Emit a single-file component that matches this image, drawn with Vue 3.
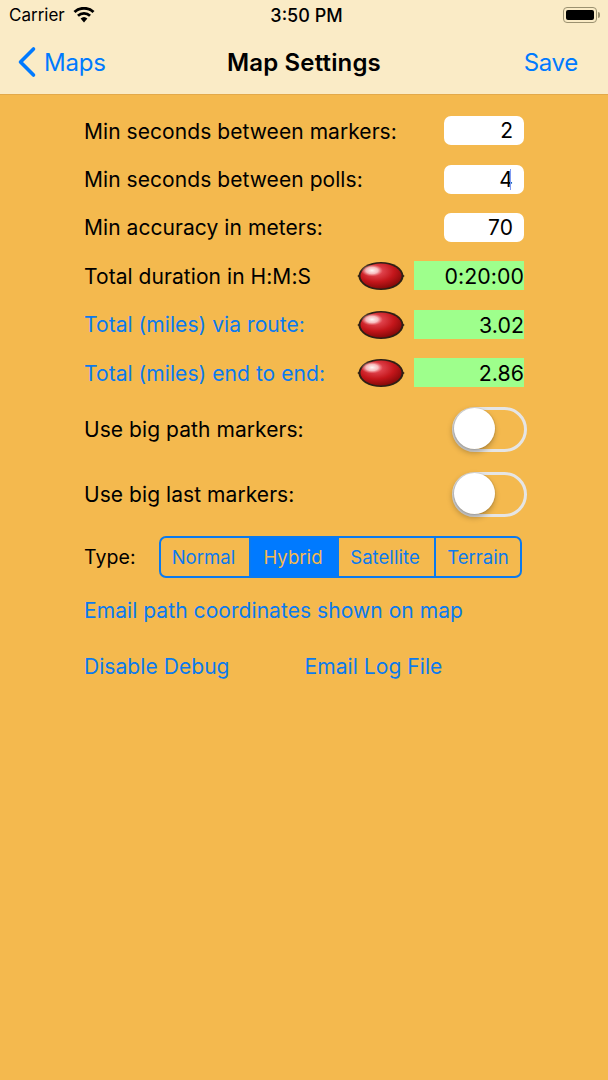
<template>
  <div class="screen">
    <header class="top">
      <div class="status">
        <div class="status-left">
          <span>Carrier</span>
          <svg class="wifi" width="22" height="16" viewBox="0 0 22 16" aria-hidden="true">
            <path d="M11 15.5 7.6 11.6a5 5 0 0 1 6.8 0Z" fill="#000" />
            <path d="M5.9 9.8 4 7.7a10.4 10.4 0 0 1 14 0l-1.9 2.1a7.6 7.6 0 0 0-10.2 0Z" fill="#000" />
            <path d="M2.5 6 .5 3.9a15.6 15.6 0 0 1 21 0L19.5 6a12.7 12.7 0 0 0-17 0Z" fill="#000" />
          </svg>
        </div>
        <span class="clock">3:50 PM</span>
        <div class="battery" aria-hidden="true"><span class="battery-fill" /></div>
      </div>
      <nav class="nav">
        <a class="back">
          <svg width="20" height="32" viewBox="0 0 20 32" aria-hidden="true">
            <path d="M16.5 3 3.5 16l13 13" fill="none" stroke="#007aff" stroke-width="3.6" stroke-linecap="round" stroke-linejoin="round" />
          </svg>
          <span>Maps</span>
        </a>
        <span class="title">Map Settings</span>
        <a class="save">Save</a>
      </nav>
    </header>

    <main class="content">
      <div v-for="row in inputRows" :key="row.label" class="row">
        <span>{{ row.label }}</span>
        <div class="input"><span :class="{ caret: row.focused }">{{ row.value }}</span></div>
      </div>

      <div v-for="row in totalRows" :key="row.label" class="row">
        <span :class="{ link: row.link }">{{ row.label }}</span>
        <div class="readout">
          <svg class="led" width="48" height="30" viewBox="0 0 48 30" aria-hidden="true">
            <defs>
              <radialGradient :id="`red${row.id}`" cx="0.38" cy="0.3" r="0.8">
                <stop offset="0" stop-color="#ee5a66" />
                <stop offset="0.55" stop-color="#c4161b" />
                <stop offset="0.88" stop-color="#8a0a0a" />
                <stop offset="1" stop-color="#4a0504" />
              </radialGradient>
              <radialGradient :id="`shine${row.id}`">
                <stop offset="0" stop-color="#fff6f4" />
                <stop offset="0.55" stop-color="#fad0d0" stop-opacity=".85" />
                <stop offset="1" stop-color="#f08a8a" stop-opacity="0" />
              </radialGradient>
            </defs>
            <ellipse cx="24" cy="15" rx="23.5" ry="4" fill="#4a3620" />
            <ellipse cx="24" cy="15" rx="22.5" ry="14" fill="#2e2015" />
            <ellipse cx="24" cy="15" rx="20.5" ry="12.4" :fill="`url(#red${row.id})`" />
            <ellipse cx="15" cy="9.5" rx="11" ry="6" :fill="`url(#shine${row.id})`" />
          </svg>
          <div class="value">{{ row.value }}</div>
        </div>
      </div>

      <div v-for="label in toggles" :key="label" class="row toggle-row">
        <span>{{ label }}</span>
        <div class="toggle"><span class="thumb" /></div>
      </div>

      <div class="type-row">
        <span class="type-label">Type:</span>
        <div class="segments">
          <span v-for="seg in segments" :key="seg.name" class="seg" :class="{ on: seg.name === mapType }" :style="{ width: seg.width + 'px', paddingRight: seg.nudge + 'px' }">{{ seg.name }}</span>
        </div>
      </div>

      <a class="link email">Email path coordinates shown on map</a>
      <div class="bottom-links">
        <a class="link">Disable Debug</a>
        <a class="link">Email Log File</a>
      </div>
    </main>
  </div>
</template>

<script setup>
const inputRows = [
  { label: 'Min seconds between markers:', value: '2' },
  { label: 'Min seconds between polls:', value: '4', focused: true },
  { label: 'Min accuracy in meters:', value: '70' }
]
const totalRows = [
  { id: 1, label: 'Total duration in H:M:S', value: '0:20:00' },
  { id: 2, label: 'Total (miles) via route:', value: '3.02', link: true },
  { id: 3, label: 'Total (miles) end to end:', value: '2.86', link: true }
]
const toggles = ['Use big path markers:', 'Use big last markers:']
const mapType = 'Hybrid'
const segments = [
  { name: 'Normal', width: 88, nudge: 3 },
  { name: 'Hybrid', width: 88, nudge: 2 },
  { name: 'Satellite', width: 97, nudge: 3 },
  { name: 'Terrain', width: 86, nudge: 0 }
]
</script>

<style scoped>
.screen {
  width: 608px; height: 1080px;
  display: flex; flex-direction: column;
  background: #f4b94e;
  font-family: Inter, "Liberation Sans", sans-serif;
  color: #000;
  overflow: hidden;
}
.top { height: 95px; background: #faebc6; border-bottom: 1px solid #e3a94a; box-sizing: border-box; }
.status {
  height: 30px; padding: 0 8px 0 9px;
  display: grid; grid-template-columns: 1fr auto 1fr; align-items: center;
  font-size: 17px;
}
.status-left { display: flex; align-items: center; gap: 8px; }
.clock { font-weight: 500; font-size: 18px; margin-left: 4px; }
.battery {
  justify-self: end; width: 34px; height: 16px; padding: 2px;
  border: 1px solid #9b9170; border-radius: 4px; box-sizing: border-box;
  position: relative; margin-right: 3px;
}
.battery::after {
  content: ""; position: absolute; right: -4px; top: 4px;
  width: 2px; height: 6px; background: #9b9170; border-radius: 0 2px 2px 0;
}
.battery-fill { display: block; height: 100%; background: #000; border-radius: 2px; }
.nav {
  height: 64px; padding: 0 30px 3px;
  display: grid; grid-template-columns: 1fr auto 1fr; align-items: center;
  font-size: 24px;
}
.back { display: flex; align-items: center; gap: 7px; margin-left: -13px; color: #007aff; letter-spacing: -.2px; }
.title { font-weight: 600; font-size: 24px; letter-spacing: .15px; }
.save { justify-self: end; color: #007aff; letter-spacing: -.3px; }

.content {
  flex: 1;
  padding: 12px 84px 0;
  font-size: 21px;
  letter-spacing: .06px;
  display: flex; flex-direction: column;
}
.row { height: 48.4px; display: flex; align-items: center; justify-content: space-between; }
.link { color: #0a7aef; }
.input {
  width: 80px; height: 29px; box-sizing: border-box; padding-right: 11px;
  margin-top: -1px;
  background: #fff; border-radius: 7px;
  display: flex; align-items: center; justify-content: flex-end;
}
.caret { position: relative; }
.caret::after {
  content: ""; position: absolute; right: 2px; top: 2px; bottom: 2px;
  width: 1px; background: #7f9bf2;
}
.readout { display: flex; align-items: center; gap: 9px; }
.led { display: block; }
.value {
  width: 110px; height: 29px; box-sizing: border-box; margin-top: -1px;
  background: #9eff8c; text-align: right; line-height: 30px;
  font-size: 21.3px;
}
.toggle-row { height: 64.5px; width: 443px; }
.toggle {
  width: 75px; height: 45px; box-sizing: border-box;
  border: 3px solid #e5e5e5; border-radius: 23px; position: relative;
}
.thumb {
  position: absolute; left: -1px; top: -2px;
  width: 41px; height: 41px; border-radius: 50%;
  background: #fff; box-shadow: -1px 3px 6px rgba(0, 0, 0, .32), 0 0 0 1px rgba(0, 0, 0, .06);
}
.type-row { display: flex; align-items: center; height: 60px; margin-top: 1px; }
.type-label { width: 75px; font-size: 19.5px; }
.segments {
  display: flex; width: 363px; height: 42px; box-sizing: border-box;
  border: 2px solid #0a7aef; border-radius: 7px; overflow: hidden;
  color: #0a7aef; font-size: 18.5px;
}
.seg {
  display: flex; align-items: center; justify-content: center;
  border-left: 2px solid #0a7aef; box-sizing: border-box;
}
.seg:first-child { border-left: 0; }
.seg.on { background: #007aff; color: #f4b94e; }
.email { margin-top: 10px; line-height: 28px; }
.bottom-links { display: flex; gap: 75px; margin-top: 28px; line-height: 28px; }
</style>
